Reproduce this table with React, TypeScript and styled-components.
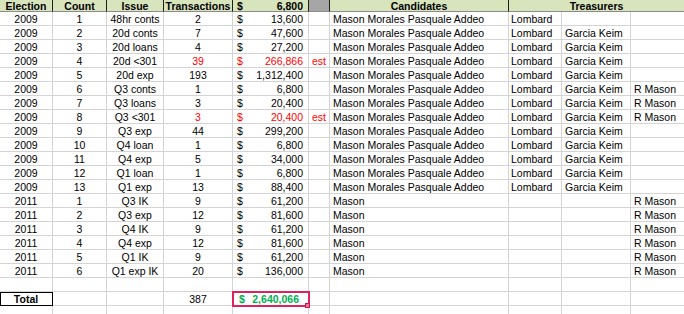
import styled, { createGlobalStyle } from 'styled-components'

type Row = {
  year: string
  count: string
  issue: string
  tx: string
  amount: string
  est?: boolean
  candidates: string
  t1?: string
  t2?: string
  t3?: string
}

const FULL = 'Mason Morales Pasquale Addeo'

const raw2009: [string, string, string, boolean?][] = [
  ['48hr conts', '2', '13,600'],
  ['20d conts', '7', '47,600'],
  ['20d loans', '4', '27,200'],
  ['20d <301', '39', '266,866', true],
  ['20d exp', '193', '1,312,400'],
  ['Q3 conts', '1', '6,800'],
  ['Q3 loans', '3', '20,400'],
  ['Q3 <301', '3', '20,400', true],
  ['Q3 exp', '44', '299,200'],
  ['Q4 loan', '1', '6,800'],
  ['Q4 exp', '5', '34,000'],
  ['Q1 loan', '1', '6,800'],
  ['Q1 exp', '13', '88,400'],
]

const raw2011: [string, string, string][] = [
  ['Q3 IK', '9', '61,200'],
  ['Q3 exp', '12', '81,600'],
  ['Q4 IK', '9', '61,200'],
  ['Q4 exp', '12', '81,600'],
  ['Q1 IK', '9', '61,200'],
  ['Q1 exp IK', '20', '136,000'],
]

const rows: Row[] = [
  ...raw2009.map(([issue, tx, amount, est], i) => ({
    year: '2009',
    count: String(i + 1),
    issue,
    tx,
    amount,
    est,
    candidates: FULL,
    t1: 'Lombard',
    t2: i > 0 ? 'Garcia Keim' : undefined,
    t3: i >= 5 && i <= 7 ? 'R Mason' : undefined,
  })),
  ...raw2011.map(([issue, tx, amount], i) => ({
    year: '2011',
    count: String(i + 1),
    issue,
    tx,
    amount,
    candidates: 'Mason',
    t3: 'R Mason',
  })),
]

const GlobalStyle = createGlobalStyle`
  html, body {
    margin: 0;
    background: #fff;
    overflow: hidden;
  }
  body {
    font-family: "Liberation Sans", Arial, sans-serif;
  }
`

export default function App() {
  return (
    <>
      <GlobalStyle />
      <Sheet>
        <HeadCell>Election</HeadCell>
        <HeadCell>Count</HeadCell>
        <HeadCell>Issue</HeadCell>
        <HeadCell>Transactions</HeadCell>
        <HeadMoney>
          <span>$</span>
          <span>6,800</span>
        </HeadMoney>
        <HeadCell $shade />
        <HeadCell>Candidates</HeadCell>
        <HeadCell $span={3}>Treasurers</HeadCell>

        {rows.map((r) => {
          const tone = r.est ? 'red' : undefined
          return [
            <Cell key={r.year + r.count + 'y'}>{r.year}</Cell>,
            <Cell key={r.year + r.count + 'c'}>{r.count}</Cell>,
            <Cell key={r.year + r.count + 'i'}>{r.issue}</Cell>,
            <Cell key={r.year + r.count + 't'} $tone={tone}>
              {r.tx}
            </Cell>,
            <Money key={r.year + r.count + 'a'} $tone={tone}>
              <span>$</span>
              <span>{r.amount}</span>
            </Money>,
            <Cell key={r.year + r.count + 'e'} $align="left" $tone={tone}>
              {r.est ? 'est' : ''}
            </Cell>,
            <Cell key={r.year + r.count + 'n'} $align="left">
              {r.candidates}
            </Cell>,
            <Cell key={r.year + r.count + '1'} $align="left" $pad={2}>
              {r.t1}
            </Cell>,
            <Cell key={r.year + r.count + '2'} $align="left">
              {r.t2}
            </Cell>,
            <Cell key={r.year + r.count + '3'} $align="left">
              {r.t3}
            </Cell>,
          ]
        })}

        {Array.from({ length: 10 }, (_, i) => (
          <Cell key={'blank' + i} />
        ))}

        <TotalLabel>Total</TotalLabel>
        <Cell />
        <Cell />
        <Cell>387</Cell>
        <Selected>
          <span>$</span>
          <span>2,640,066</span>
        </Selected>
        {Array.from({ length: 5 }, (_, i) => (
          <Cell key={'tot' + i} />
        ))}

        {Array.from({ length: 10 }, (_, i) => (
          <Cell key={'tail' + i} />
        ))}
      </Sheet>
    </>
  )
}

const Sheet = styled.div`
  display: grid;
  grid-template-columns: 53px 54px 57px 69px 76px 21px 179px 53px 69px 54px;
  grid-template-rows: 12px;
  grid-auto-rows: 14px;
  width: 685px;
  font-size: 10.5px;
  line-height: 12px;
  color: #000;
`

const Cell = styled.div<{
  $align?: 'left' | 'center' | 'right'
  $tone?: 'red' | 'green'
  $pad?: number
}>`
  box-sizing: border-box;
  display: flex;
  align-items: center;
  justify-content: ${({ $align }) =>
    $align === 'left' ? 'flex-start' : $align === 'right' ? 'flex-end' : 'center'};
  padding: 0 ${({ $pad }) => $pad ?? 3}px;
  border-right: 1px solid #d4d4d4;
  border-bottom: 1px solid #d4d4d4;
  white-space: nowrap;
  overflow: hidden;
  color: ${({ $tone }) => ($tone === 'red' ? '#ff0000' : $tone === 'green' ? '#00b050' : '#000')};
`

const Money = styled(Cell)`
  justify-content: space-between;
  padding: 0 5px 0 4px;
`

const HeadCell = styled.div<{ $shade?: boolean; $span?: number }>`
  box-sizing: border-box;
  display: flex;
  align-items: center;
  justify-content: center;
  grid-column: span ${({ $span }) => $span ?? 1};
  background: ${({ $shade }) => ($shade ? '#a6a6a6' : '#d8e4bc')};
  border-right: 1px solid #1e1e1e;
  border-bottom: 1px solid #8c8c8c;
  font-weight: bold;
  white-space: nowrap;
  overflow: hidden;
`

const HeadMoney = styled(HeadCell)`
  justify-content: space-between;
  padding: 0 5px 0 4px;
`

const TotalLabel = styled(Cell)`
  font-weight: bold;
  outline: 1px solid #000;
  outline-offset: -1px;
`

const Selected = styled(Money)`
  position: relative;
  z-index: 1;
  overflow: visible;
  padding: 0 9px 0 6px;
  font-weight: bold;
  color: #00b050;
  outline: 2px solid #e2215c;
  outline-offset: -1px;

  &::after {
    content: '';
    position: absolute;
    right: -2px;
    bottom: -3px;
    width: 3px;
    height: 3px;
    background: #f2738f;
    border: 1px solid #c8164e;
  }
`
